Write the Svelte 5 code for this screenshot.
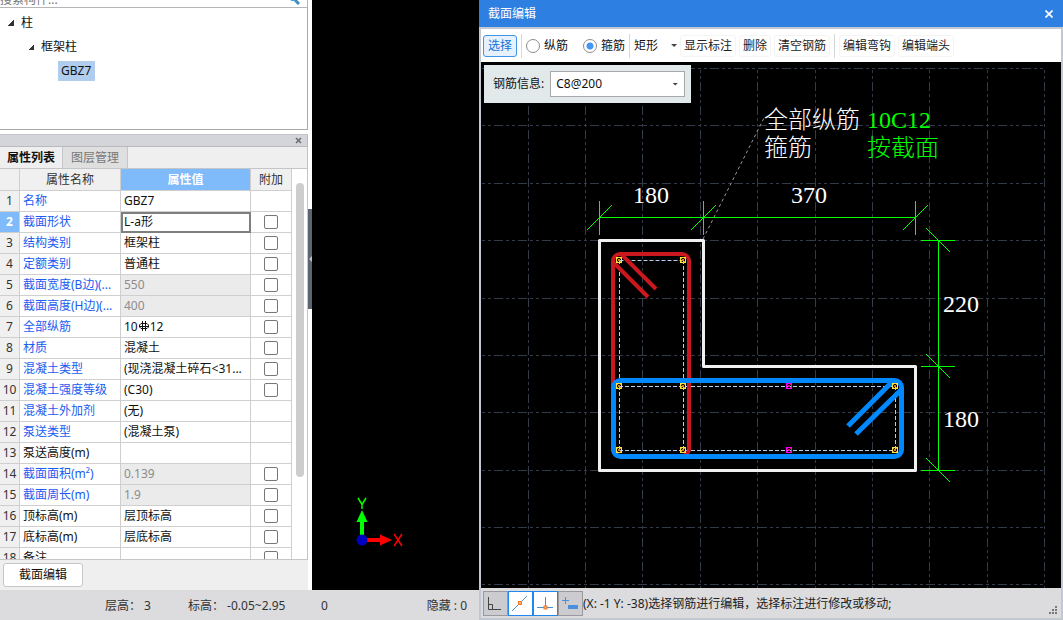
<script lang="ts">
  // Main modelling window (component tree, property list, 3D view) with the
  // section editor docked at its right. Drawing units are editor pixels.
  interface Property {
    name: string;
    value: string;
    required?: boolean;
    locked?: boolean;
    extra?: boolean;
    rebar?: [string, string];
  }

  const properties: Property[] = [
    { name: '名称', value: 'GBZ7', required: true },
    { name: '截面形状', value: 'L-a形', required: true, extra: true },
    { name: '结构类别', value: '框架柱', required: true, extra: true },
    { name: '定额类别', value: '普通柱', required: true, extra: true },
    { name: '截面宽度(B边)(...', value: '550', required: true, locked: true, extra: true },
    { name: '截面高度(H边)(...', value: '400', required: true, locked: true, extra: true },
    { name: '全部纵筋', value: '', rebar: ['10', '12'], required: true, extra: true },
    { name: '材质', value: '混凝土', required: true, extra: true },
    { name: '混凝土类型', value: '(现浇混凝土碎石<31...', required: true, extra: true },
    { name: '混凝土强度等级', value: '(C30)', required: true, extra: true },
    { name: '混凝土外加剂', value: '(无)', required: true },
    { name: '泵送类型', value: '(混凝土泵)', required: true },
    { name: '泵送高度(m)', value: '' },
    { name: '截面面积(m²)', value: '0.139', required: true, locked: true, extra: true },
    { name: '截面周长(m)', value: '1.9', required: true, locked: true, extra: true },
    { name: '顶标高(m)', value: '层顶标高', extra: true },
    { name: '底标高(m)', value: '层底标高', extra: true },
    { name: '备注', value: '', extra: true },
  ];

  let selected = $state(1);
  let barType = $state('stirrup');

  const gridX = [528, 585, 642, 700, 757, 815, 872, 929, 987, 1044];
  const gridY = [68, 125, 183, 240, 298, 355, 412, 470, 527, 584];
  const cornerBars = [
    [619, 260], [683, 260], [619, 386], [683, 386],
    [619, 450], [683, 450], [895, 386], [895, 450],
  ];
  const middleBars = [[789, 386], [789, 450]];
  const dimX = [599, 703, 915];
  const dimY = [240, 366, 470];
</script>

{#snippet bar(x: number, y: number, kind: string)}
  <g class="bar {kind}">
    <path d="M{x - 2} {y - 2}l4 4m0 -4l-4 4" />
    <circle cx={x} cy={y} r="3" />
  </g>
{/snippet}

<div class="app">
  <main class="window">
    <div class="workspace">
      <aside class="side">
        <div class="search">
          <span>搜索构件...</span>
          <svg width="12" height="12" viewBox="0 0 12 12" aria-hidden="true">
            <circle cx="5" cy="4" r="3" fill="none" stroke="#3c9bd0" stroke-width="2" />
            <path d="M7 7l4 4" stroke="#3c8fc4" stroke-width="3" />
          </svg>
        </div>
        <ul class="tree">
          <li><i class="caret"></i>柱</li>
          <li class="level2"><i class="caret"></i>框架柱</li>
          <li class="level3"><span class="picked">GBZ7</span></li>
        </ul>

        <section class="panel" aria-label="属性列表">
          <header class="panel-title">
            <button aria-label="关闭">
              <svg width="7" height="7" viewBox="0 0 7 7"><path d="M1 1l5 5m0 -5l-5 5" stroke="#666" stroke-width="1.4" /></svg>
            </button>
          </header>
          <div class="tabs">
            <button class="tab active">属性列表</button>
            <button class="tab">图层管理</button>
          </div>
          <div class="sheet">
            <table>
              <colgroup>
                <col class="c-no" /><col class="c-name" /><col class="c-value" /><col class="c-extra" />
              </colgroup>
              <thead>
                <tr><th></th><th>属性名称</th><th class="current">属性值</th><th>附加</th></tr>
              </thead>
              <tbody>
                {#each properties as p, i}
                  <tr class:selected={selected === i} onclick={() => (selected = i)}>
                    <th scope="row">{i + 1}</th>
                    <td class:required={p.required}>{p.name}</td>
                    <td class="value" class:locked={p.locked}>
                      {#if p.rebar}
                        {p.rebar[0]}<svg class="rebar" width="12" height="11" viewBox="0 0 12 11" aria-hidden="true">
                          <path d="M4.500 0v10M7.500 0v10M1 5.500h10M3 2.500h6l1.500 1.500v2l-1.500 1.500h-6l-1.500 -1.500v-2z" />
                        </svg>{p.rebar[1]}
                      {:else}{p.value}{/if}
                    </td>
                    <td class="extra">
                      {#if p.extra}<input type="checkbox" aria-label="附加 {p.name}" />{/if}
                    </td>
                  </tr>
                {/each}
              </tbody>
            </table>
            <div class="scroll"><div class="thumb"></div></div>
          </div>
          <footer class="panel-foot"><button class="edit">截面编辑</button></footer>
        </section>
      </aside>

      <div class="splitter">
        <div class="grip"><svg width="4" height="6" viewBox="0 0 4 6"><path d="M4 0v6l-3 -3z" fill="#b9c0c8" /></svg></div>
      </div>

      <div class="view">
        <svg class="axes" width="48" height="52" viewBox="355 495 48 52" aria-label="坐标轴">
          <path d="M362 540V516" stroke="#0f0" stroke-width="4" />
          <path d="M362 510l5.500 12h-11z" fill="#0f0" />
          <path d="M362 540h20" stroke="red" stroke-width="4" />
          <path d="M392 540l-12 -5.500v11z" fill="red" />
          <circle cx="362" cy="540" r="5.500" fill="#0000c0" />
          <path d="M358 498l4 6.500l4 -6.500M362 504v5" fill="none" stroke="#0f0" stroke-width="1.500" />
          <path d="M394 534l8 12m0 -12l-8 12" fill="none" stroke="red" stroke-width="1.500" />
        </svg>
      </div>
    </div>

    <footer class="status">
      <span class="floor">层高： 3</span>
      <span class="level">标高： -0.05~2.95</span>
      <span class="count">0</span>
      <span class="hidden">隐藏 : 0</span>
    </footer>
  </main>

  <section class="dialog" aria-label="截面编辑">
    <header class="dialog-title">
      <span>截面编辑</span>
      <button aria-label="关闭">
        <svg width="8" height="8" viewBox="0 0 8 8"><path d="M0.500 0.500l7 7m0 -7l-7 7" stroke="#fff" stroke-width="1.700" /></svg>
      </button>
    </header>

    <div class="toolbar">
      <button class="tool chosen">选择</button>
      <i class="sep"></i>
      <label class="radio"><input type="radio" value="bar" bind:group={barType} />纵筋</label>
      <label class="radio"><input type="radio" value="stirrup" bind:group={barType} />箍筋</label>
      <i class="sep"></i>
      <span class="drop shape">
        <select aria-label="箍筋形状"><option>矩形</option></select>
      </span>
      <button class="tool">显示标注</button>
      <button class="tool">删除</button>
      <button class="tool">清空钢筋</button>
      <i class="sep"></i>
      <button class="tool">编辑弯钩</button>
      <button class="tool">编辑端头</button>
    </div>

    <div class="canvas">
      <svg class="drawing" viewBox="481 62 580 526" preserveAspectRatio="xMinYMin meet">
        <g class="grid">
          {#each gridY as y}<path d="M481 {y + 0.5}H1045" stroke-dashoffset="11" />{/each}
          {#each gridX as x}<path d="M{x + 0.5} 68V588" stroke-dashoffset="10" />{/each}
        </g>

        <path class="leader" d="M703 239L764 118" />

        <g class="dims">
          <path d="M599 217.500H916M938.500 240V471" />
          {#each dimX as x}<path d="M{x + 0.5} 201V235M{x - 12} 230L{x + 13} 205" />{/each}
          {#each dimY as y}<path d="M921 {y + 0.5}H955M926 {y - 12}L950 {y + 12}" />{/each}
        </g>

        <path class="outline" d="M599.500 240.500H703.500V366.500H915.500V470.500H599.500Z" />

        <path class="axis" d="M619.500 260.500H683.500M619.500 260V450M683.500 260V450M619 386.500H895M619 450.500H895M895.500 386V450" />

        <g class="stirrup red">
          <rect x="613" y="254" width="76" height="202" rx="7" />
          <path d="M614 263L648 297M621 254L656 289" />
        </g>
        <g class="stirrup blue">
          <rect x="613.500" y="380.500" width="288" height="76" rx="7" />
          <path d="M892 382L848 426M901 390L856 434" />
        </g>

        {#each cornerBars as [x, y]}{@render bar(x, y, 'corner')}{/each}
        {#each middleBars as [x, y]}{@render bar(x, y, 'middle')}{/each}

        <g class="notes">
          <text x="633" y="203">180</text>
          <text x="791" y="203">370</text>
          <text x="943" y="312">220</text>
          <text x="943" y="427">180</text>
          <text x="764" y="128">全部纵筋</text>
          <text x="764" y="156">箍筋</text>
          <text class="green" x="867" y="128">10C12</text>
          <text class="green" x="867" y="156">按截面</text>
        </g>
      </svg>

      <div class="info">
        <label for="bar-info">钢筋信息:</label>
        <span class="drop spec">
          <select id="bar-info"><option>C8@200</option></select>
        </span>
      </div>
    </div>

    <footer class="dialog-status">
      <div class="snaps">
        <button aria-label="正交">
          <svg width="23" height="23" viewBox="0 0 23 23"><path d="M4.500 5v12.500H17M4.500 12.500H8.500V17" fill="none" stroke="#444" /></svg>
        </button>
        <button class="on" aria-label="最近点">
          <svg width="23" height="23" viewBox="0 0 23 23"><path d="M3 19L18 4" stroke="#4a90d9" /><rect x="9.500" y="9.500" width="3" height="3" fill="#f5b27a" stroke="#f07820" /></svg>
        </button>
        <button class="on" aria-label="垂足">
          <svg width="23" height="23" viewBox="0 0 23 23"><path d="M3 15.500H19M11.500 5V15" stroke="#4a90d9" /><rect x="10" y="14" width="3" height="3" fill="#f5b27a" stroke="#f07820" /></svg>
        </button>
        <button aria-label="动态输入">
          <svg width="23" height="23" viewBox="0 0 23 23"><path d="M3 8.500H10M6.500 5V12" stroke="#4a8fdc" /><path d="M9 13h10v4h-10z" fill="#4a8fdc" /></svg>
        </button>
      </div>
      <output>(X: -1 Y: -38)选择钢筋进行编辑，选择标注进行修改或移动;</output>
      <svg class="resize" width="8" height="8" viewBox="0 0 8 8" aria-hidden="true">
        <path d="M6 0h2v2h-2zM3 3h2v2h-2zM6 3h2v2h-2zM0 6h2v2h-2zM3 6h2v2h-2zM6 6h2v2h-2z" fill="#777" />
      </svg>
    </footer>
  </section>
</div>

<style>
  .app {
    display: grid;
    grid-template-columns: 479px minmax(0, 1fr);
    height: 100vh;
    overflow: hidden;
    background: #000;
    color: #111;
    font: 12px/20px 'Noto Sans', 'Noto Sans CJK SC', sans-serif;
  }
  .app * {
    box-sizing: border-box;
  }
  button, select {
    margin: 0;
    padding: 0;
    border: 0;
    background: none;
    color: inherit;
    font: inherit;
    white-space: nowrap;
  }
  svg {
    display: block;
  }

  /* main window */
  .window {
    display: flex;
    flex-direction: column;
    min-height: 0;
  }
  .workspace {
    display: flex;
    flex: 1;
    min-height: 0;
  }
  .side {
    display: flex;
    flex-direction: column;
    width: 308px;
    background: #fff;
  }
  .search {
    display: flex;
    justify-content: space-between;
    align-items: flex-end;
    height: 8px;
    padding-right: 7px;
    overflow: hidden;
    border-right: 1px solid #b5b5b8;
    border-bottom: 1px solid #b5b5b8;
    color: #777;
  }
  .search span {
    margin-bottom: -3px;
  }
  .search svg {
    margin-bottom: 2px;
  }
  .tree {
    height: 122px;
    margin: 0 0 4px;
    padding: 3px 0 0 8px;
    border: 1px solid #a9a9ad;
    border-width: 0 1px 1px 0;
    list-style: none;
  }
  .tree li {
    display: flex;
    align-items: center;
    gap: 7px;
    height: 24px;
  }
  .tree .level2 {
    padding-left: 20px;
  }
  .tree .level3 {
    padding-left: 50px;
  }
  .caret {
    width: 6px;
    height: 6px;
    background: linear-gradient(135deg, transparent 50%, #333 50%);
  }
  .picked {
    padding: 0 4px 0 3px;
    background: #b1cdee;
  }
  .panel {
    display: flex;
    flex: 1;
    flex-direction: column;
    min-height: 0;
    border-top: 1px solid #c3c5c8;
    background: #efefef;
  }
  .panel-title {
    display: flex;
    justify-content: flex-end;
    align-items: center;
    height: 12px;
    padding-right: 5px;
    border-right: 1px solid #b8babd;
    border-bottom: 1px solid #b8babd;
    background: #d3d5db;
  }
  .tabs {
    display: flex;
    height: 22px;
    border-right: 1px solid #c3c5c8;
    border-bottom: 1px solid #c3c5c8;
  }
  .tab {
    width: 65px;
    border-right: 1px solid #c3c5c8;
    background: #dfdfdf;
    color: #777;
  }
  .tab.active {
    width: 63px;
    background: #efefef;
    color: #111;
    font-weight: bold;
  }
  .sheet {
    display: flex;
    flex: 1;
    min-height: 0;
    overflow: hidden;
    border-right: 1px solid #c3c5c8;
    border-bottom: 1px solid #c3c5c8;
    background: #fff;
  }
  table {
    flex: none;
    width: 292px;
    height: max-content;
    border-collapse: separate;
    border-spacing: 0;
    table-layout: fixed;
  }
  .c-no {
    width: 20px;
  }
  .c-name {
    width: 101px;
  }
  .c-value {
    width: 130px;
  }
  .c-extra {
    width: 41px;
  }
  th, td {
    height: 21px;
    padding: 0 3px;
    border-right: 1px solid #cfcfcf;
    border-bottom: 1px solid #cfcfcf;
    line-height: 20px;
    white-space: nowrap;
  }
  th {
    padding: 0;
    background: #f0f0f0;
    color: #333;
    font-weight: normal;
  }
  th.current, .selected th {
    background: #7fbafa;
    color: #fff;
    font-weight: bold;
  }
  thead th {
    height: 22px;
    line-height: 21px;
  }
  .required {
    color: #1a5cf0;
  }
  .locked {
    background: #ebebeb;
    color: #8c8c8c;
  }
  .selected .value {
    outline: 2px solid #7f7f7f;
    outline-offset: -2px;
  }
  .rebar {
    display: inline-block;
    vertical-align: -1px;
  }
  .rebar path {
    fill: none;
    stroke: #111;
  }
  .extra {
    padding: 0;
    text-align: center;
  }
  .extra input {
    display: block;
    appearance: none;
    width: 14px;
    height: 14px;
    margin: 0 auto;
    border: 1px solid #777;
    border-radius: 2px;
    background: #fff;
  }
  .scroll {
    flex: 1;
    padding: 14px 3px 82px 4px;
  }
  .thumb {
    width: 8px;
    height: 100%;
    border-radius: 4px;
    background: #cdcdcd;
  }
  .panel-foot {
    padding: 3px;
  }
  .edit {
    display: block;
    width: 80px;
    height: 24px;
    border: 1px solid #c6c6c6;
    border-radius: 3px;
    background: #fff;
  }
  .splitter {
    display: flex;
    flex-direction: column;
    justify-content: center;
    width: 4px;
    padding-bottom: 72px;
    background: #fff;
  }
  .grip {
    display: flex;
    align-items: center;
    height: 100px;
    background: #5c6470;
  }
  .view {
    display: flex;
    flex: 1;
    align-items: flex-end;
    padding: 0 43px 43px;
    background: #000;
  }
  .axes {
    flex: none;
  }
  .status {
    display: flex;
    align-items: center;
    height: 30px;
    padding: 2px 12px 0 105px;
    background: #dcdcde;
    color: #333;
  }
  .floor {
    width: 83px;
  }
  .level {
    width: 133px;
  }
  .hidden {
    margin-left: auto;
  }

  /* section editor */
  .dialog {
    display: flex;
    flex-direction: column;
    min-width: 0;
    background: #c2c8d2;
  }
  .dialog-title {
    display: flex;
    justify-content: space-between;
    align-items: center;
    height: 27px;
    padding: 0 10px 0 9px;
    background: #2d80e2;
    color: #fff;
  }
  .toolbar {
    display: flex;
    align-items: center;
    gap: 3px;
    height: 33px;
    margin: 2px 2px 0;
    padding: 0 2px;
    overflow: hidden;
    background: #fff;
  }
  .tool {
    flex: none;
    height: 22px;
    padding: 0 3px;
    border: 1px solid #f4f4f4;
    border-radius: 3px;
    color: #222;
  }
  .tool.chosen {
    padding: 0 4px;
    border-color: #3d96ea;
    background: #e6f1fc;
    color: #1272d8;
  }
  .sep {
    flex: none;
    width: 1px;
    height: 24px;
    margin: 0 1px;
    background: #d8d8d8;
  }
  .radio {
    display: flex;
    flex: none;
    align-items: center;
    gap: 4px;
    margin-right: 12px;
  }
  .radio + .radio {
    margin-right: 0;
  }
  .radio input {
    appearance: none;
    width: 14px;
    height: 14px;
    margin: 0;
    border: 1px solid #8c8c8c;
    border-radius: 50%;
    background: #fff;
  }
  .radio input:checked {
    background: radial-gradient(circle, #4596f5 3px, #fff 4px);
  }
  .drop {
    display: flex;
    flex: none;
    align-items: center;
    background: #fff;
  }
  .drop::after {
    flex: none;
    width: 6px;
    height: 3px;
    margin-left: -12px;
    background: #444;
    clip-path: polygon(0 0, 100% 0, 50% 100%);
    content: '';
    pointer-events: none;
  }
  .drop select {
    flex: none;
    appearance: none;
    width: 100%;
    height: 22px;
    padding: 0 5px;
  }
  .shape {
    width: 43px;
  }
  .shape select {
    padding: 0;
  }
  .shape::after {
    margin-left: -6px;
  }
  .canvas {
    position: relative;
    flex: 1;
    min-height: 0;
    margin: 0 2px;
    overflow: hidden;
    background: #000;
  }
  .drawing {
    width: 100%;
    height: 100%;
  }
  .info {
    position: absolute;
    top: 3px;
    left: 3px;
    display: flex;
    align-items: center;
    gap: 6px;
    height: 38px;
    padding: 0 6px 0 9px;
    background: #e1e9eb;
  }
  .spec {
    width: 135px;
    height: 26px;
    border: 1px solid #a8a8a8;
  }
  .grid path {
    stroke: #343b48;
    stroke-dasharray: 9 3 3 3 3 3;
  }
  .leader {
    stroke: #999;
    stroke-dasharray: 3 3;
  }
  .dims path {
    stroke: #0f0;
  }
  .outline {
    fill: none;
    stroke: #f0f0f0;
    stroke-width: 3;
    stroke-linejoin: round;
  }
  .axis {
    fill: none;
    stroke: #b4cdf0;
    stroke-dasharray: 4 2;
  }
  .stirrup {
    fill: none;
  }
  .red {
    stroke: #cb181f;
    stroke-width: 4;
  }
  .blue {
    stroke: #0088ff;
    stroke-width: 5;
  }
  .bar {
    fill: none;
    stroke-width: 1;
    shape-rendering: crispEdges;
  }
  .corner circle {
    stroke: #ffe040;
  }
  .corner path {
    stroke: #d88a10;
  }
  .middle circle {
    stroke: #f0f;
  }
  .middle path {
    stroke: #d01080;
  }
  .notes text {
    fill: #fff;
    font-family: 'Liberation Serif', 'Noto Sans CJK SC', serif;
    font-size: 24px;
    font-weight: 300;
  }
  .notes .green {
    fill: #0f0;
  }
  .dialog-status {
    display: flex;
    align-items: center;
    height: 30px;
    margin: 0 2px 2px;
    padding: 0 4px 0 2px;
    background: #dcdcde;
    color: #222;
  }
  .snaps {
    display: flex;
    flex: none;
  }
  .snaps button {
    width: 25px;
    height: 25px;
    border: 1px solid #9a9a9e;
    background: #ccccd0;
  }
  .snaps .on {
    border-color: #1e88f0;
    background: #fff;
  }
  output {
    flex: 1;
    padding-top: 2px;
    overflow: hidden;
    white-space: nowrap;
  }
  .resize {
    flex: none;
    align-self: flex-end;
    margin-bottom: 4px;
  }
</style>
